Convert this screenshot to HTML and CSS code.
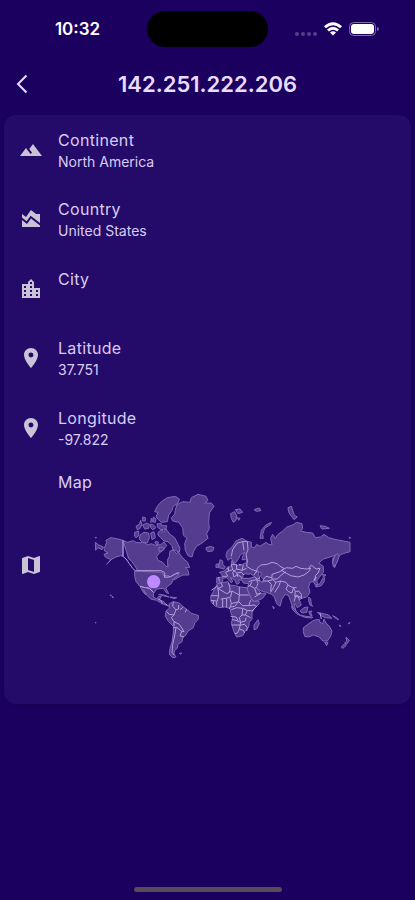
FILE: index.html
```html
<!DOCTYPE html>
<html lang="en">
<head>
<meta charset="utf-8">
<meta name="viewport" content="width=device-width, initial-scale=1">
<title>142.251.222.206</title>
<link rel="stylesheet" href="styles.css">
</head>
<body>
<div class="status">
  <div class="status-side"><time class="clock">10:32</time></div>
  <div class="island"></div>
  <div class="status-side status-icons">
    <svg class="dots" viewBox="0 0 22 4" aria-hidden="true"><circle cx="2" cy="2" r="2"/><circle cx="8" cy="2" r="2"/><circle cx="14" cy="2" r="2"/><circle cx="20" cy="2" r="2"/></svg>
    <svg class="wifi" viewBox="0 0 18 14" aria-hidden="true"><path d="M0 4.300Q9-3.700 18 4.300L16.100 6.300Q9 .2 1.900 6.300Z"/><path d="M3 7.400Q9 2.200 15 7.400L13.100 9.400Q9 6 4.900 9.400Z"/><path d="M6 10.500Q9 8 12 10.500L9 13.600Z"/></svg>
    <svg class="battery" viewBox="0 0 30 14" aria-hidden="true"><rect class="battery-frame" x=".5" y=".5" width="26" height="13" rx="4"/><rect x="2" y="2" width="23" height="10" rx="3"/><path class="battery-tip" d="M28 5v4q2-.5 2-2t-2-2Z"/></svg>
  </div>
</div>
<header class="bar">
  <button class="back" type="button" aria-label="Back"><svg viewBox="0 0 12 20" aria-hidden="true"><path d="M10.500 1.500L2 10l8.500 8.500"/></svg></button>
  <h1>142.251.222.206</h1>
</header>
<main class="card">
  <ul class="rows">
    <li class="row">
      <svg class="icon" viewBox="0 0 24 24" aria-hidden="true"><path d="M14 6l-3.750 5 2.850 3.800-1.600 1.200C9.810 13.750 7 10 7 10l-6 8h22L14 6z"/></svg>
      <div class="text"><h2>Continent</h2><p>North America</p></div>
    </li>
    <li class="row">
      <svg class="icon" viewBox="0 0 24 24" aria-hidden="true"><path d="M3 13v7h18v-1.500l-9-7L8 17l-5-4zM3 7l4 3 5-7 5 4h4v8.970l-9.400-7.310-3.980 5.480L3 10.440V7z"/></svg>
      <div class="text"><h2>Country</h2><p>United States</p></div>
    </li>
    <li class="row">
      <svg class="icon" viewBox="0 0 24 24" aria-hidden="true"><path d="M15 11V5l-3-3-3 3v2H3v14h18V11h-6zm-8 8H5v-2h2v2zm0-4H5v-2h2v2zm0-4H5V9h2v2zm6 8h-2v-2h2v2zm0-4h-2v-2h2v2zm0-4h-2V9h2v2zm0-4h-2V5h2v2zm6 12h-2v-2h2v2zm0-4h-2v-2h2v2z"/></svg>
      <div class="text"><h2>City</h2><p></p></div>
    </li>
    <li class="row">
      <svg class="icon" viewBox="0 0 24 24" aria-hidden="true"><path d="M12 2C8.130 2 5 5.130 5 9c0 5.250 7 13 7 13s7-7.750 7-13c0-3.870-3.130-7-7-7zm0 9.500a2.500 2.500 0 0 1 0-5 2.500 2.500 0 0 1 0 5z"/></svg>
      <div class="text"><h2>Latitude</h2><p>37.751</p></div>
    </li>
    <li class="row">
      <svg class="icon" viewBox="0 0 24 24" aria-hidden="true"><path d="M12 2C8.130 2 5 5.130 5 9c0 5.250 7 13 7 13s7-7.750 7-13c0-3.870-3.130-7-7-7zm0 9.500a2.500 2.500 0 0 1 0-5 2.500 2.500 0 0 1 0 5z"/></svg>
      <div class="text"><h2>Longitude</h2><p>-97.822</p></div>
    </li>
  </ul>
  <section class="row map-row">
    <svg class="icon" viewBox="0 0 24 24" aria-hidden="true"><path d="M20.500 3l-.16.030L15 5.100 9 3 3.360 4.900c-.21.070-.36.250-.36.480V20.500c0 .28.220.5.5.5l.16-.03L9 18.900l6 2.100 5.640-1.900c.21-.07.360-.25.360-.48V3.500c0-.28-.22-.5-.5-.5zM15 19l-6-2.110V5l6 2.110V19z"/></svg>
    <div class="text">
      <h2>Map</h2>
      <svg class="map" viewBox="15 27 768 495" role="img" aria-label="World map">
        <g class="land">
          <path d="M45 184l5-12-2-6 14-8 18 3 19 5v48l-7-2-14 4-12 6-16 16 12-14-16-8-4-8 12-4-10-6-2-8Z"/>
          <path d="M16 172l10 8 14 6-4 8-12-6-7 8ZM16 157h3v2h-3Z"/>
          <path d="M99 166l13 6 18-5 8 5 12 2 10-4 12 10 12-4 12 5 16-2 10-8 8 10-10 14-12 9-8 10 4 12 14 6 10 12 6 2-2-20 6-12 2-16 12-2 6 10 7-4 14 18 14 12 6 16-13 0 8 8 3 14-18 0-12 6-12 7-12 3-6-14-84-5-8-8-10-16-10-14-9-8Z"/>
          <path d="M134 258l82 4 8 14 16 0 14-10 8-4 4 8-16 12-6 14-12 8-4 6 8 16-8-4-8-12-20 2-8 12-14-16-12 0-16-4-12-14-4-16Z"/>
          <path d="M150 304l16 4 12 2 12 12 0 14 10 6 6-8 8 0-6 10 14 6 4 8 12 6-6-2-16-6-16-10-18-4-10-10-12-18 8 16-8-8Z"/>
          <path d="M206 328l16 2 16 6-12-2ZM240 336l20 2-8 3Z"/>
          <path d="M238 356l12-6 18 4 12 12 12 8 10 10 24 8-2 12-10 10-4 14-16 10-6 12-10 8-2 12-12 8-2 12-8 6-2 10 6 10-10 2-10-10 2-18 6-20 4-26 0-20-14-14-10-16 2-16 10-8Z"/>
          <path d="M268 505l8-1-4 4ZM60 330l4 1-2 2ZM66 333l5 5-4-1ZM16 412h2v2h-2Z"/>
          <path d="M194 80l8-16 12-14 18-12 24-4 12 8-4 12-14 10-4 12-10 14-4 20-18 2-8-8-8-8 6-14Z"/>
          <path d="M202 116l12 0 0 6 16 0-2 10-16 2-10-8ZM190 96l8 6-2 10-8-2Z"/>
          <path d="M204 142l12-8 4 8 8-10 12 16 14 10 10 20 6 12-2 12-12-6-8-2-2-12-12-12-12-2-10-10-8-8Z"/>
          <path d="M150 150l12-8 14 2 2 14-6 16-16-2-8-10ZM134 142l12-4 0 14-8 6-4-4ZM182 144l10-4 4 18-10 6Z"/>
          <path d="M138 124l10-6 4-12 4 14-8 12-6 2ZM158 96l8 2 0 10-8 0ZM158 120l12-6 8 4-2 12-12 2ZM180 118l8 0 10 10-10 6-6-6ZM184 100l6 8-8 4Z"/>
          <path d="M206 188l12-2 4 8-14 6ZM198 168l8 4-4 8-8-6Z"/>
          <path d="M260 60l18-10 22 2 4-14 20-10 24 6 6 12-10 8 20 0 8 10-14 20-2 28 2 18-8 16 4 14-18 14-16 10-10 16-4 16-12-4-8-16-2-20 6-16-10-10-2-22-12-16-18-4-4-10 10-10 2-12Z"/>
          <path d="M348 188l14-4 10 4-4 10-14 2-5-5ZM422 86l12-6 6 12-2 14-8 6-6-12ZM436 74l14-2 8 10-14 4ZM442 98l8 2-4 6ZM492 74l16-5 5 8-14 2Z"/>
          <path d="M408 212l4-14 14-12 12-18 18-8 14 8 14 4 0 14 10 2 6-10 10 6 18-12 8 6 10 2-4-20 6-12 8 12 6-10 16-12 12-12 18-6 12-8 16 4 2 14-6 8 16 4 20 2 8 14 16-2 10-8 14 10 22 6 22 4 20 4 0 28-14 4-12 4-12 8 0 10-8 22-6-12 0-16 10-10-18 6-20 6-14 12 14 10 0 18-10 12-10 14 4 10-8 2-6-10-10 2-4 14 4 16-10 14-16 4-6 6 6 14-12 8-6-12-4 2 6 20-8-6-8-22-6-18-10-4-10 14-6 22-10-8-8-22-8-6-14-6-12-2-18-10 14 16 14 0-10 14-24 10-10-10-10-22-2-8 4-14-16-2-4-8-10-2 2 10-8 4-6-14-14-6 8 10-4 6-14-16-12 2 0 10-8 6-10-2 0-16 18-2-4-10-6-4 14-4 12-10 10-6 0-14 4-2 4 14 14 2 12-4 12-6 0-8-14 0 4-16 4-6-12 6-6 12-8 12-8 4-6-18-10 8Z"/>
          <path d="M386 248l4-24 8 4 0 10 8 8-4 6ZM378 238l8-2 0 10-8 2Z"/>
          <path d="M382 296l32-6 4 10 16 2 16 4 20 2 6 16 6 14 8 12 16-2 2 8-16 16-6 12 0 18-8 10-2 14-10 12-8 14-18 4-8-16-8-24 4-20-6-14-2-12-16-4-14 2-14-4-12-12-2-18 8-14Z"/>
          <path d="M504 404l4 12-8 16-8 2 0-14ZM548 364l5 3-2 5ZM698 280l6-2-2 12-8 12-16 4-2-4 14-6ZM698 268l10 2-8 6ZM730 245l-2-12 6-20 8-8 6 8-8 22Z"/>
          <path d="M510 160l4-24 14-16 16-8-2 6-18 12-6 18 2 12ZM594 68l10-4 6 18 4 10 8 4-10 8-8-10-8-12ZM690 122l16 2 12 6-22 2ZM778 157h3v3h-3Z"/>
          <path d="M604 364l10 10 16 16-8-2-14-14ZM628 390l20 4 20 2-2 3-22-2ZM630 378l12-10 12-2-4 16-14 2ZM656 380l10-2-4 6 4 8-6-2ZM656 336l6 6 2 16 4 6-8-4-4-12ZM682 382l18 4 16 4 10 10-20-2-12-6ZM728 392l12 6 6 6-6-2ZM748 420l5 4-2 2ZM774 416l6-4-2 4Z"/>
          <path d="M640 428l14-10 14-10 10-4 10 0 2 8 8 4 4-14 6 12 10 10 8 14-4 16-10 14-14 0-10-12-18-6-14 6-12-2-4-14ZM704 472l10 0-4 10ZM768 456l10 10-8 12-6-4 6-6ZM764 476l4 6-10 8-4-4Z"/>
        </g>
        <path class="sea" d="M458 272l8-6 8 2 8-2 12 10-16 4-18 0ZM504 260l10 4-2 10 8 8-2 10-8-4-2-12Z"/>
        <g class="borders">
          <path d="M99 166v48l9 8 10 14 10 14 8 7h78l10 6v14l18-2 14-8 12-4M150 304l16 4 12 2 12 12M204 342l8 4 6 10M226 356l6 4"/>
          <path d="M250 350l-2 14 10 10 8-2 0-12M280 366l-10 8M290 372l-4 10M258 374l-6 16-14-2-8-8M252 390l-8 8 8 12 0 14M252 410l16 8 8 12 6 10-8-2-12-10-12 0M276 438l-6 14 12 4M258 428l-4 24-6 26-2 24 6 8"/>
          <path d="M424 214l4-20 14-20 16-4 4 26M458 170l14 0 2 24-6 14M468 208l4 18-2 18 16 10 14 4-8 12M424 238l16 0 0 14 16 4 14-6M414 244l2 14-10 4 8 12M416 258l12-4 12 10 14-2 8 8M424 238l4 16M440 252l-12 10 4 14M456 256l4-16M432 276l12-8 8 8M446 238l8 2M398 274l14 0M386 276l2 14M456 282l-4-8M410 250l6 4M440 264l4 12"/>
          <path d="M494 276l8 6 8-4M476 290l12-4 12-2 10 4M500 284l4 12-4 8M486 290l-6 12-6 2M480 302l14 8 8-4M494 310l6 18 14-4M510 326l-16 10M518 288l16 0 10 10-2 20M534 288l14-4 10 8-8 16-8 14M500 262l2-12 10-10 20-2 14-6 16 4 8 8 12 6-8 8-16 6-12 4 0 10-18-4-8 10M544 282l18 0 12-12 14-10M558 292l14-4-6 16-12 18M572 288l16 4 6 8 14 8 12 0"/>
          <path d="M574 256l16-8 18 2 10-6 14 6 18 2 12-2-6 10-14 10-18 6-22-4-14-8-14-8M656 250l8-10 14 12 12-2-6 14-8 8 0 12-6 4M594 300l-6 12 8 8 10 4 4-14M610 308l6 12-2 14 12 2 2 10M616 320l10-2 8 10 0 14M634 338l-16-8-6 20M676 288l-4-6 8-4M690 384l4 18"/>
          <path d="M392 292l6 12-16 8M384 302l-20 14M384 306l2 26-22 0M384 310l26 16 8-4 2-12-4-16M418 322l8-4 22 12M448 306l0 24 28 0M426 318l-4 18-14 4-16 2M448 330l-2 20-22 6-4-16M398 342l0 24M410 340l0 26M386 332l-4 16M362 346l18 2 0 14M370 348l0 10M424 356l-6 16M446 350l12 12 18 0 6-16M476 362l16-2 8 4-14 14-14-2M446 350l-12 14-12 2M424 374l16-6 18 2-2 20-8 8 4 14-14-6-12-2M458 370l14 6-6 14-10 0M466 390l16 8M422 394l16 2 6 10M452 412l14-4 2-10M426 420l26 0 12-2 8 10M452 412l-4 20-6 12-8 2M448 432l12 4 4 8M472 428l-2 10"/>
        </g>
        <circle class="spot" cx="191" cy="290" r="20"/>
      </svg>
    </div>
  </section>
</main>
<div class="home-bar"></div>
</body>
</html>
```
FILE: styles.css
```css
* { box-sizing: border-box; }
body {
  margin: 0;
  min-height: 100vh;
  display: flex;
  flex-direction: column;
  background: #1b005f;
  color: #d9ccf4;
  font-family: Inter, "Liberation Sans", sans-serif;
}
h1, h2, p, ul { margin: 0; padding: 0; }
svg { display: block; flex: none; }

.status {
  display: grid;
  grid-template-columns: minmax(0, 1fr) auto minmax(0, 1fr);
  align-items: center;
  padding-top: 11px;
  color: #fff;
}
.status-side {
  display: flex;
  align-items: center;
  justify-content: center;
}
.clock { font-size: 17px; line-height: 24px; font-weight: 600; padding-left: 8px; }
.island { width: 121px; height: 36px; border-radius: 18px; background: #000; }
.status-icons { fill: #fff; gap: 7px; justify-content: flex-end; padding-right: 36px; }
.dots { width: 22px; height: 4px; margin-top: 9px; fill: #54408a; }
.wifi { width: 18px; height: 14px; }
.battery { width: 30px; height: 14px; }
.battery-frame { fill: none; stroke: #7e6da5; }
.battery-tip { fill: #7e6da5; }

.bar {
  display: grid;
  grid-template-columns: 44px 1fr 44px;
  align-items: center;
  height: 56px;
  margin: 9px 0 3px;
}
.bar h1 {
  font-size: 22px;
  line-height: 28px;
  font-weight: 600;
  text-align: center;
  color: #e8dcff;
}
.back {
  display: flex;
  align-items: center;
  justify-content: center;
  height: 44px;
  padding: 0;
  border: 0;
  background: none;
}
.back svg { width: 12px; height: 20px; fill: none; stroke: #e8dcff; stroke-width: 2; }

.card {
  margin: 0 4px;
  padding-bottom: 45px;
  border-radius: 12px;
  background: #240b69;
  box-shadow: 0 1px 3px #16004f;
}
.rows {
  display: grid;
  grid-auto-rows: minmax(69px, auto) minmax(70px, auto);
  list-style: none;
}
.row {
  display: flex;
  align-items: center;
  gap: 15px;
  padding: 0 23px 0 15px;
}
.icon { width: 24px; height: 24px; fill: #cac3d8; }
.text { flex: 1; }
.text h2 { font-size: 16px; line-height: 24px; font-weight: 400; letter-spacing: 0.02em; }
.text p { min-height: 20px; font-size: 14px; line-height: 20px; }
.map-row { padding-top: 8px; }
.map { width: 100%; max-width: 256px; margin: 0 auto; overflow: visible; }
.land { fill: #553c8f; stroke: #8169b6; stroke-width: 3; stroke-linejoin: round; }
.sea { fill: #240b69; stroke: #a58fd2; stroke-width: 2; }
.borders { fill: none; stroke: #b39fdf; stroke-width: 3; stroke-linejoin: round; }
.spot { fill: #bd8bff; }

.home-bar {
  width: 148px;
  height: 5px;
  margin: auto auto 8px;
  border-radius: 3px;
  background: #544b55;
}
```
